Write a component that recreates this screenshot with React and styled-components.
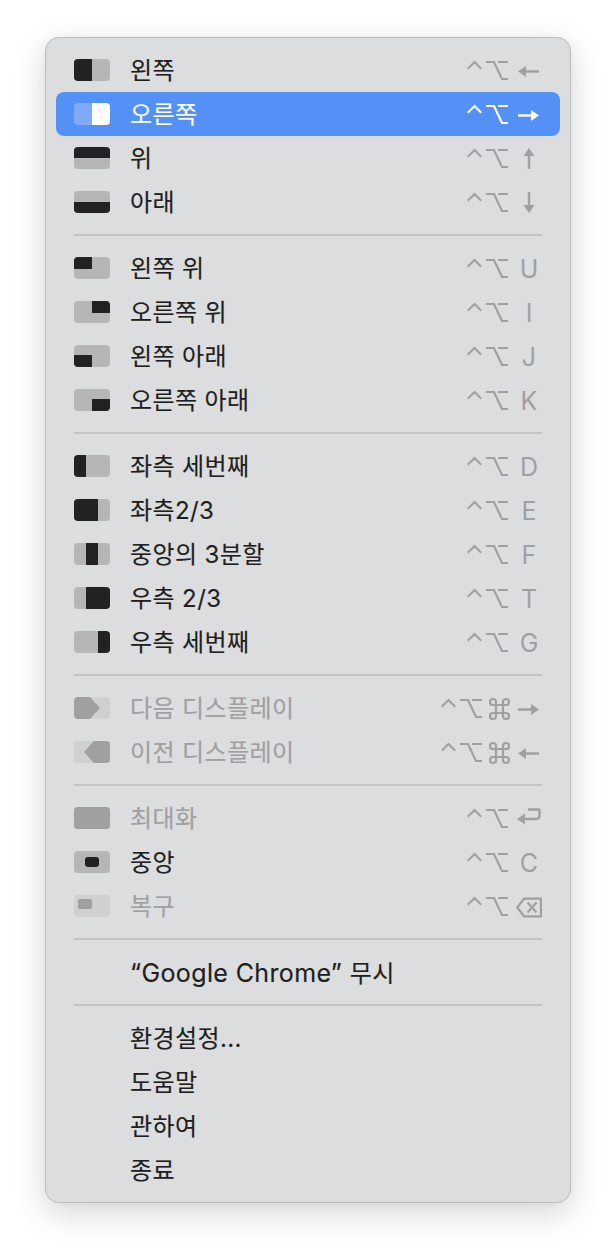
import React from "react";
import styled, { createGlobalStyle } from "styled-components";

const Global = createGlobalStyle`
  html, body { margin: 0; padding: 0; background: #ffffff; }
  * { box-sizing: border-box; }
`;

const Page = styled.div`
  width: 616px;
  height: 1256px;
  padding: 37px 45px 0;
  overflow: hidden;
  background: #ffffff;
`;

const Panel = styled.div`
  width: 526px;
  height: 1166px;
  padding: 10px;
  background: #dcddde;
  border: 1px solid #bdbdbf;
  border-radius: 14px;
  box-shadow: 0 10px 32px rgba(0, 0, 0, 0.17), 0 0 6px rgba(0, 0, 0, 0.04);
  font-family: "Inter", "Noto Sans CJK KR", sans-serif;
`;

const Row = styled.div`
  display: flex;
  align-items: center;
  height: 44px;
  padding: 0 18px;
  border-radius: 8px;
  background: ${(p) => (p.$active ? "#5391f7" : "transparent")};
  color: ${(p) => (p.$active ? "#ffffff" : p.$disabled ? "#a0a0a2" : "#1f1f21")};
`;

const IconSlot = styled.div`
  flex: none;
  display: flex;
  width: 36px;
  height: 22px;
  margin-right: 20px;
`;

const Label = styled.span`
  flex: 1;
  padding-top: 2px;
  font-size: 24px;
  line-height: 42px;
  letter-spacing: 0.4px;
  white-space: nowrap;
  -webkit-text-stroke: 0.15px currentColor;
`;

const Latin = styled.span`
  font-size: 25px;
  letter-spacing: 0.38px;
`;

const Shortcut = styled.div`
  flex: none;
  display: flex;
  align-items: center;
  color: ${(p) => (p.$active ? "#ffffff" : "#a0a0a2")};
`;

const Glyph = styled.svg`
  flex: none;
  display: block;
  margin-left: ${(p) => p.$ml || 0}px;
`;

const KeySlot = styled.div`
  flex: none;
  display: flex;
  justify-content: center;
  align-items: center;
  width: 26px;
  height: 44px;
  padding-top: 2px;
  margin-left: ${(p) => p.$ml}px;
  font-size: 25px;
  line-height: 42px;
`;

const Separator = styled.div`
  height: 2px;
  margin: 10px 18px;
  background: #c4c4c6;
`;

function WindowIcon({ shape, tone }) {
  const bg = tone === "active" ? "#7eaaf9" : tone === "disabled" ? "#d0d0d2" : "#b6b6b8";
  const fg = tone === "active" ? "#ffffff" : tone === "disabled" ? "#a0a0a2" : "#222224";
  const id = React.useId();
  return (
    <svg width="36" height="22" viewBox="0 0 36 22">
      <clipPath id={id}>
        <rect width="36" height="22" rx="4" />
      </clipPath>
      <g clipPath={`url(#${id})`}>
        <rect width="36" height="22" fill={bg} />
        {shape.rect && <rect x={shape.rect[0]} y={shape.rect[1]} width={shape.rect[2]} height={shape.rect[3]} rx={shape.rect[4] || 0} fill={fg} />}
        {shape.poly && <polygon points={shape.poly} fill={fg} />}
      </g>
    </svg>
  );
}

const Control = () => (
  <Glyph width="15" height="44" viewBox="0 0 15 44" fill="none">
    <path d="M0.7 20.8 L7.5 14 L14.3 20.8" stroke="currentColor" strokeWidth="2.2" />
  </Glyph>
);

const Option = () => (
  <Glyph width="22" height="44" viewBox="0 0 22 44" fill="none" $ml={4}>
    <path d="M0 14 H8 L16 31 H22 M12 14 H22" stroke="currentColor" strokeWidth="2.2" />
  </Glyph>
);

const Command = () => (
  <Glyph width="21" height="44" viewBox="0 0 21 44" fill="none" $ml={7}>
    <path
      d="M7 19 H14 V27 H7 Z M7 19 V16 A3 3 0 1 0 4 19 H17 A3 3 0 1 0 14 16 V30 A3 3 0 1 0 17 27 H4 A3 3 0 1 0 7 30 Z"
      stroke="currentColor"
      strokeWidth="2.2"
    />
  </Glyph>
);

const arrows = {
  left: <><path d="M5 22.5 H23" stroke="currentColor" strokeWidth="2.4" /><path d="M2 22.5 L10 17 V28 Z" fill="currentColor" /></>,
  right: <><path d="M2 22.5 H20" stroke="currentColor" strokeWidth="2.4" /><path d="M23 22.5 L15 17 V28 Z" fill="currentColor" /></>,
  up: <><path d="M13 16 V32" stroke="currentColor" strokeWidth="2.4" /><path d="M13 11 L7.5 19 H18.5 Z" fill="currentColor" /></>,
  down: <><path d="M13 11 V27" stroke="currentColor" strokeWidth="2.4" /><path d="M13 32 L7.5 24 H18.5 Z" fill="currentColor" /></>,
  enter: <><path d="M6 22 H20 Q23.5 22 23.5 18.5 V14 Q23.5 12.5 22 12.5 H12" stroke="currentColor" strokeWidth="2.4" fill="none" /><path d="M1 22 L9 16.5 V27.5 Z" fill="currentColor" /></>,
  del: <path d="M8 13.7 H25 V31.3 H8 L1.2 22.5 Z M11.5 17.5 L20.5 27.5 M20.5 17.5 L11.5 27.5" stroke="currentColor" strokeWidth="2.3" fill="none" />,
};

const ArrowKey = ({ name }) => (
  <Glyph width="26" height="44" viewBox="0 0 26 44" fill="none">
    {arrows[name]}
  </Glyph>
);

function Keys({ k, letter, cmd, active }) {
  return (
    <Shortcut $active={active}>
      <Control />
      <Option />
      {cmd && <Command />}
      <KeySlot $ml={cmd ? 6 : 8}>{letter ? letter : <ArrowKey name={k} />}</KeySlot>
    </Shortcut>
  );
}

const H = 18;
const groups = [
  [
    { t: "왼쪽", s: { rect: [0, 0, H, 22] }, k: "left" },
    { t: "오른쪽", s: { rect: [H, 0, H, 22] }, k: "right", active: true },
    { t: "위", s: { rect: [0, 0, 36, 11] }, k: "up" },
    { t: "아래", s: { rect: [0, 11, 36, 11] }, k: "down" },
  ],
  [
    { t: "왼쪽 위", s: { rect: [0, 0, H, 12] }, l: "U" },
    { t: "오른쪽 위", s: { rect: [H, 0, H, 12] }, l: "I" },
    { t: "왼쪽 아래", s: { rect: [0, 10, H, 12] }, l: "J" },
    { t: "오른쪽 아래", s: { rect: [H, 10, H, 12] }, l: "K" },
  ],
  [
    { t: "좌측 세번째", s: { rect: [0, 0, 12, 22] }, l: "D" },
    { t: "좌측2/3", s: { rect: [0, 0, 24, 22] }, l: "E" },
    { t: "중앙의 3분할", s: { rect: [12, 0, 12, 22] }, l: "F" },
    { t: "우측 2/3", s: { rect: [12, 0, 24, 22] }, l: "T" },
    { t: "우측 세번째", s: { rect: [24, 0, 12, 22] }, l: "G" },
  ],
  [
    { t: "다음 디스플레이", s: { poly: "0,0 16,0 26,11 16,22 0,22" }, k: "right", cmd: true, disabled: true },
    { t: "이전 디스플레이", s: { poly: "36,0 20,0 10,11 20,22 36,22" }, k: "left", cmd: true, disabled: true },
  ],
  [
    { t: "최대화", s: { rect: [0, 0, 36, 22] }, k: "enter", disabled: true },
    { t: "중앙", s: { rect: [11, 6, 14, 10, 3] }, l: "C" },
    { t: "복구", s: { rect: [4, 4, 14, 10, 2] }, k: "del", disabled: true },
  ],
  [{ t: "무시", latin: "“Google Chrome” " }],
  [{ t: "환경설정..." }, { t: "도움말" }, { t: "관하여" }, { t: "종료" }],
];

export default function App() {
  return (
    <Page>
      <Global />
      <Panel>
        {groups.map((items, i) => (
          <React.Fragment key={i}>
            {i > 0 && <Separator />}
            {items.map((it) => (
              <Row key={it.t} $active={it.active} $disabled={it.disabled}>
                <IconSlot>
                  {it.s && <WindowIcon shape={it.s} tone={it.active ? "active" : it.disabled ? "disabled" : "normal"} />}
                </IconSlot>
                <Label>
                  {it.latin && <Latin>{it.latin}</Latin>}
                  {it.t}
                </Label>
                {(it.k || it.l) && <Keys k={it.k} letter={it.l} cmd={it.cmd} active={it.active} />}
              </Row>
            ))}
          </React.Fragment>
        ))}
      </Panel>
    </Page>
  );
}
